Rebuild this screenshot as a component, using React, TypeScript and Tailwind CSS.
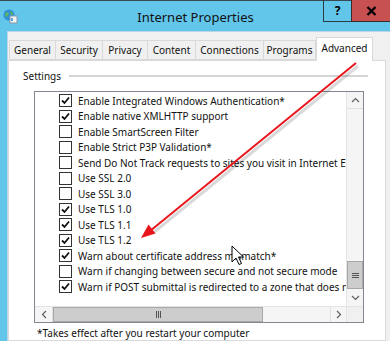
import React from "react";

const items: [boolean, string][] = [
  [true, "Enable Integrated Windows Authentication*"],
  [true, "Enable native XMLHTTP support"],
  [false, "Enable SmartScreen Filter"],
  [false, "Enable Strict P3P Validation*"],
  [false, "Send Do Not Track requests to sites you visit in Internet Explorer"],
  [false, "Use SSL 2.0"],
  [false, "Use SSL 3.0"],
  [true, "Use TLS 1.0"],
  [true, "Use TLS 1.1"],
  [true, "Use TLS 1.2"],
  [true, "Warn about certificate address mismatch*"],
  [false, "Warn if changing between secure and not secure mode"],
  [true, "Warn if POST submittal is redirected to a zone that does not permit posts"],
];

const tabs = [
  ["General", "w-[47px]"],
  ["Security", "w-[48px]"],
  ["Privacy", "w-[46px]"],
  ["Content", "w-[49px]"],
  ["Connections", "w-[69px]"],
  ["Programs", "w-[53px]"],
];

function Check({ on }: { on: boolean }) {
  return (
    <div className="w-[13px] h-[13px] border border-[#333333] bg-white flex items-center justify-center shrink-0">
      {on && (
        <svg width="9" height="9" viewBox="0 0 9 9">
          <path d="M1 4.5 L3.5 7 L8 1.5" stroke="#111" strokeWidth="1.8" fill="none" />
        </svg>
      )}
    </div>
  );
}

export default function App() {
  return (
    <div
      className="relative w-[390px] h-[341px] overflow-hidden bg-[#62c5ea] flex flex-col text-black"
      style={{ fontFamily: '"Noto Sans", "Liberation Sans", sans-serif' }}
    >
      {/* title bar */}
      <div className="h-[31px] shrink-0 border-t border-[#3a4a55] flex items-start relative">
        <div className="mt-[8px] ml-[3px] w-[15px] h-[15px] relative">
          <svg width="15" height="15" viewBox="0 0 15 15">
            <circle cx="6" cy="6" r="5.5" fill="#2f8fd8" />
            <path d="M2 4 Q5 2 6 5 Q4 7 3 9 Z" fill="#5cb85c" />
            <path d="M7 2 Q10 3 10 6 L8 6 Z" fill="#5cb85c" />
            <rect x="7" y="7" width="7" height="7" fill="#f4f4f4" stroke="#8a9aa8" />
            <rect x="8" y="9" width="2" height="3" fill="#5aa0d8" />
          </svg>
        </div>
        <div className="flex-1 text-center text-[13px] leading-none pt-[10px] pl-[50px] text-[#111]">
          Internet Properties
        </div>
        <div className="flex h-[22px] -mt-px">
          <div className="w-[28px] border-l border-b border-[#2c3b46] flex items-center justify-center font-bold text-[12px]">
            ?
          </div>
          <div className="w-[39px] bg-[#c75050] border-l border-b border-[#3a2a2a] flex items-center justify-center">
            <svg width="11" height="10" viewBox="0 0 11 10">
              <path d="M1.5 1 L9.5 9 M9.5 1 L1.5 9" stroke="#000" strokeWidth="2.4" />
            </svg>
          </div>
        </div>
      </div>

      {/* body */}
      <div className="flex-1 ml-[7px] bg-[#f0f0f0] border-l border-t border-[#b9d6e6] flex flex-col text-[10px]">
        <div className="flex items-end h-[28px] pl-[1px] shrink-0">
          {tabs.map(([t, w]) => (
            <div
              key={t}
              className={`${w} h-[20px] border border-[#d9d9d9] -mr-px bg-[#f0f0f0] flex items-center justify-center leading-none text-[#111]`}
            >
              {t}
            </div>
          ))}
          <div className="w-[57px] h-[24px] ml-[1px] border border-b-0 border-[#d9d9d9] bg-white flex items-start justify-center pt-[5px] leading-none relative z-10 -mb-px text-[#111]">
            Advanced
          </div>
        </div>
        <div className="flex-1 w-[378px] bg-white border border-[#d9d9d9] flex flex-col">
          <div className="flex items-center h-[30px] pl-[14px] pr-[17px]">
            <span className="text-[#111]">Settings</span>
            <div className="flex-1 h-[2px] bg-[#d5d5d5] ml-[8px]"></div>
          </div>
          <div className="ml-[25px] w-[330px] h-[232px] border border-[#828790] flex flex-col bg-white">
            <div className="flex flex-1 min-h-0">
              <div className="flex-1 min-w-0 overflow-hidden pt-[1px] pl-[24px]">
                {items.map(([on, t]) => (
                  <div key={t} className="flex items-center h-[15.5px] whitespace-nowrap">
                    <Check on={on} />
                    <span className="ml-[6px] leading-none text-[#111]">{t}</span>
                  </div>
                ))}
              </div>
              <div className="w-[17px] bg-[#f5f5f5] border-l border-[#e4e4e4] flex flex-col">
                <div className="h-[17px] flex items-center justify-center border-b border-[#e0e0e0]">
                  <svg width="9" height="6" viewBox="0 0 9 6">
                    <path d="M1 5 L4.5 1.5 L8 5" stroke="#606060" strokeWidth="1.2" fill="none" />
                  </svg>
                </div>
                <div className="flex-1"></div>
                <div className="h-[28px] bg-[#cdcdcd] border border-[#a8a8a8] flex items-center justify-center">
                  <svg width="7" height="7" viewBox="0 0 7 7">
                    <path d="M0 1.5 H7 M0 3.5 H7 M0 5.5 H7" stroke="#555" strokeWidth="1" />
                  </svg>
                </div>
                <div className="h-[17px] flex items-center justify-center">
                  <svg width="9" height="6" viewBox="0 0 9 6">
                    <path d="M1 1 L4.5 4.5 L8 1" stroke="#606060" strokeWidth="1.2" fill="none" />
                  </svg>
                </div>
              </div>
            </div>
            <div className="h-[16px] flex border-t border-[#e4e4e4] bg-[#f5f5f5] shrink-0">
              <div className="w-[18px] flex items-center justify-center border-r border-[#e0e0e0]">
                <svg width="6" height="9" viewBox="0 0 6 9">
                  <path d="M5 1 L1.5 4.5 L5 8" stroke="#606060" strokeWidth="1.2" fill="none" />
                </svg>
              </div>
              <div className="w-[210px] bg-[#cdcdcd] border border-[#a8a8a8] flex items-center justify-center">
                <svg width="7" height="7" viewBox="0 0 7 7">
                  <path d="M1.5 0 V7 M3.5 0 V7 M5.5 0 V7" stroke="#555" strokeWidth="1" />
                </svg>
              </div>
              <div className="flex-1"></div>
              <div className="w-[16px] flex items-center justify-center border-l border-[#e0e0e0]">
                <svg width="6" height="9" viewBox="0 0 6 9">
                  <path d="M1 1 L4.5 4.5 L1 8" stroke="#606060" strokeWidth="1.2" fill="none" />
                </svg>
              </div>
              <div className="w-[17px] bg-[#f0f0f0] border-l border-[#e4e4e4]"></div>
            </div>
          </div>
          <div className="pl-[28px] pt-[5px] leading-none text-[#111]">
            *Takes effect after you restart your computer
          </div>
        </div>
      </div>

      {/* annotation arrow and cursor */}
      <svg className="absolute left-0 top-0 pointer-events-none" width="390" height="341" viewBox="0 0 390 341">
        <line x1="358" y1="66" x2="153" y2="233" stroke="#000" strokeOpacity="0.15" strokeWidth="3" />
        <line x1="356" y1="63" x2="150" y2="231" stroke="#e8161c" strokeWidth="2" />
        <polygon points="141,238 155.5,233.5 148.5,224.5" fill="#e8161c" />
        <path
          d="M232 246 L232 262 L236 258 L239 264.5 L241.5 263.5 L238.5 257 L243.5 257 Z"
          fill="#fff"
          stroke="#000"
          strokeWidth="1"
          strokeLinejoin="round"
        />
      </svg>
    </div>
  );
}
